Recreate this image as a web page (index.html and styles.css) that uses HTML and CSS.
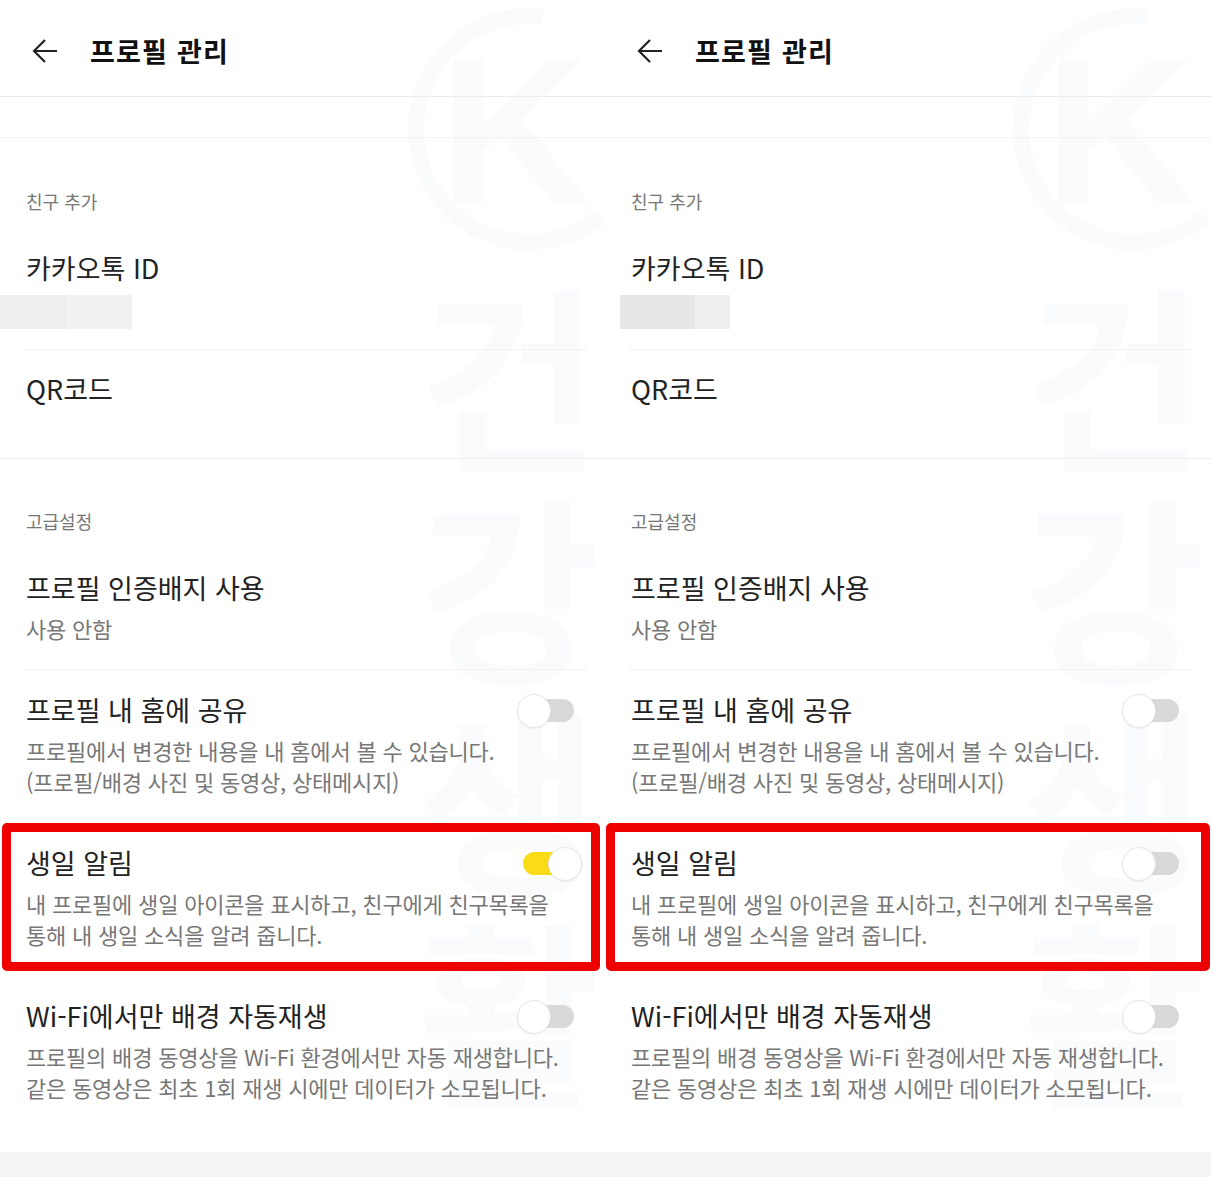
FILE: index.html
```html
<!DOCTYPE html>
<html lang="ko">
<head>
    <meta charset="utf-8">
    <meta name="viewport" content="width=device-width, initial-scale=1.0">
    <title>프로필 관리</title>
    <link rel="stylesheet" href="styles.css">
</head>
<body>
    <div class="screens">
        <!-- before -->
        <section class="panel">
            <div class="watermark" aria-hidden="true">
                <svg class="mark-logo" width="200" height="250" viewBox="0 0 200 250">
                    <path class="mark-ring" d="M140 14 A113 113 0 1 0 197 214"/>
                    <text class="mark-letter" x="36" y="200">K</text>
                </svg>
                <div class="mark-text">
                    <span>건</span>
                    <span>강</span>
                    <span>생</span>
                    <span>활</span>
                </div>
            </div>

            <header class="topbar">
                <svg class="back" width="28" height="26" viewBox="0 0 28 26">
                    <path d="M26 13H3M14 2 3 13l11 11"/>
                </svg>
                <h1>프로필 관리</h1>
            </header>
            <div class="spacer"></div>

            <div class="group group-friend">
                <h2 class="group-title">친구 추가</h2>
                <div class="row row-id">
                    <div class="row-title">카카오톡 ID</div>
                    <div class="redact redact-left"><span></span><span></span></div>
                </div>
                <div class="row row-qr">
                    <div class="row-title">QR코드</div>
                </div>
            </div>

            <div class="group group-advanced">
                <h2 class="group-title">고급설정</h2>
                <div class="row row-line">
                    <div class="row-title">프로필 인증배지 사용</div>
                    <p class="row-desc">사용 안함</p>
                </div>
                <div class="row">
                    <div class="row-head">
                        <div class="row-title">프로필 내 홈에 공유</div>
                        <span class="toggle"></span>
                    </div>
                    <p class="row-desc">프로필에서 변경한 내용을 내 홈에서 볼 수 있습니다.<br>(프로필/배경 사진 및 동영상, 상태메시지)</p>
                </div>
                <div class="row marked">
                    <div class="row-head">
                        <div class="row-title">생일 알림</div>
                        <span class="toggle on"></span>
                    </div>
                    <p class="row-desc">내 프로필에 생일 아이콘을 표시하고, 친구에게 친구목록을<br>통해 내 생일 소식을 알려 줍니다.</p>
                </div>
                <div class="row">
                    <div class="row-head">
                        <div class="row-title">Wi-Fi에서만 배경 자동재생</div>
                        <span class="toggle"></span>
                    </div>
                    <p class="row-desc">프로필의 배경 동영상을 Wi-Fi 환경에서만 자동 재생합니다.<br>같은 동영상은 최초 1회 재생 시에만 데이터가 소모됩니다.</p>
                </div>
            </div>
        </section>

        <!-- after -->
        <section class="panel panel-right">
            <div class="watermark" aria-hidden="true">
                <svg class="mark-logo" width="200" height="250" viewBox="0 0 200 250">
                    <path class="mark-ring" d="M140 14 A113 113 0 1 0 197 214"/>
                    <text class="mark-letter" x="36" y="200">K</text>
                </svg>
                <div class="mark-text">
                    <span>건</span>
                    <span>강</span>
                    <span>생</span>
                    <span>활</span>
                </div>
            </div>

            <header class="topbar">
                <svg class="back" width="28" height="26" viewBox="0 0 28 26">
                    <path d="M26 13H3M14 2 3 13l11 11"/>
                </svg>
                <h1>프로필 관리</h1>
            </header>
            <div class="spacer"></div>

            <div class="group group-friend">
                <h2 class="group-title">친구 추가</h2>
                <div class="row row-id">
                    <div class="row-title">카카오톡 ID</div>
                    <div class="redact redact-right"><span></span><span></span></div>
                </div>
                <div class="row row-qr">
                    <div class="row-title">QR코드</div>
                </div>
            </div>

            <div class="group group-advanced">
                <h2 class="group-title">고급설정</h2>
                <div class="row row-line">
                    <div class="row-title">프로필 인증배지 사용</div>
                    <p class="row-desc">사용 안함</p>
                </div>
                <div class="row">
                    <div class="row-head">
                        <div class="row-title">프로필 내 홈에 공유</div>
                        <span class="toggle"></span>
                    </div>
                    <p class="row-desc">프로필에서 변경한 내용을 내 홈에서 볼 수 있습니다.<br>(프로필/배경 사진 및 동영상, 상태메시지)</p>
                </div>
                <div class="row marked">
                    <div class="row-head">
                        <div class="row-title">생일 알림</div>
                        <span class="toggle"></span>
                    </div>
                    <p class="row-desc">내 프로필에 생일 아이콘을 표시하고, 친구에게 친구목록을<br>통해 내 생일 소식을 알려 줍니다.</p>
                </div>
                <div class="row">
                    <div class="row-head">
                        <div class="row-title">Wi-Fi에서만 배경 자동재생</div>
                        <span class="toggle"></span>
                    </div>
                    <p class="row-desc">프로필의 배경 동영상을 Wi-Fi 환경에서만 자동 재생합니다.<br>같은 동영상은 최초 1회 재생 시에만 데이터가 소모됩니다.</p>
                </div>
            </div>
        </section>
    </div>
    <div class="bottom-band"></div>
</body>
</html>
```
FILE: styles.css
```css
* {
    margin: 0;
    padding: 0;
    box-sizing: border-box;
}

body {
    font-family: "Noto Sans CJK KR", "Noto Sans", sans-serif;
    background: white;
    color: #222;
    overflow: hidden;
}

.screens {
    display: grid;
    grid-template-columns: 605px 606px;
    height: 1152px;
}

.panel {
    position: relative;
    overflow: hidden;
}

.bottom-band {
    height: 25px;
    background: #f5f5f5;
}

/* faint logo behind the content */
.watermark {
    position: absolute;
    top: 0;
    left: 0;
    width: 100%;
    height: 100%;
}

.mark-logo {
    position: absolute;
    top: 3px;
    left: 403px;
}

.mark-ring {
    fill: none;
    stroke: #fafbfc;
    stroke-width: 16;
}

.mark-letter {
    font-family: "Liberation Sans", sans-serif;
    font-size: 210px;
    font-weight: 700;
    fill: #fafbfc;
}

.mark-text {
    position: absolute;
    top: 264px;
    left: 418px;
    display: flex;
    flex-direction: column;
    font-size: 198px;
    font-weight: 700;
    line-height: 212px;
    color: #fafbfc;
}

.topbar {
    position: relative;
    height: 97px;
    display: flex;
    align-items: center;
    padding-left: 31px;
    padding-top: 4px;
    border-bottom: 1px solid #ececec;
}

.back {
    fill: none;
    stroke: #222;
    stroke-width: 2.2;
    margin-top: 2px;
    margin-right: 31px;
}

h1 {
    font-size: 27px;
    font-weight: 700;
    color: #111;
    letter-spacing: 1.2px;
}

.spacer {
    position: relative;
    height: 41px;
    border-bottom: 1px solid #f2f3f4;
}

.group {
    position: relative;
    padding-top: 51px;
}

.group-friend {
    height: 321px;
    border-bottom: 1px solid #ededed;
}

.group-advanced {
    padding-top: 50px;
}

.group-title {
    font-size: 18px;
    font-weight: 400;
    line-height: 24px;
    color: #777;
    padding-left: 26px;
    margin-bottom: 12px;
}

.row {
    position: relative;
    padding: 22px 31px 23px 26px;
}

.panel-right .row {
    padding-right: 32px;
}

.row-id {
    padding-bottom: 21px;
}

.row-id::after,
.row-line::after {
    content: "";
    position: absolute;
    left: 24px;
    right: 18px;
    bottom: 0;
    border-bottom: 1px solid #f3f3f3;
}

.row-line::after {
    bottom: -3px;
}

.row-qr {
    padding-top: 18px;
}

.row-head {
    display: flex;
    justify-content: space-between;
    align-items: center;
}

.row-title {
    font-size: 27px;
    line-height: 41px;
    color: #222;
}

.row-desc {
    margin-top: 5px;
    font-size: 22px;
    line-height: 31px;
    letter-spacing: -0.2px;
    color: #777;
}

.redact {
    display: flex;
    height: 34px;
    margin-top: 7px;
}

.redact-left {
    width: 132px;
    margin-left: -26px;
}

.redact-left span:first-child {
    width: 66px;
    background: #eeeeee;
}

.redact-left span:last-child {
    width: 66px;
    background: #f1f1f1;
}

.redact-right {
    width: 110px;
    margin-left: -11px;
}

.redact-right span:first-child {
    width: 75px;
    background: #e7e7e7;
}

.redact-right span:last-child {
    width: 35px;
    background: #eeeeee;
}

/* red box around the row being explained */
.marked::after {
    content: "";
    position: absolute;
    top: 3px;
    bottom: 2px;
    left: 2px;
    right: 5px;
    border: 9px solid #ee0000;
    border-radius: 5px;
}

.panel-right .marked::after {
    left: 1px;
    right: 1px;
}

.toggle {
    position: relative;
    display: block;
    width: 51px;
    height: 23px;
    margin-top: 2px;
    border-radius: 12px;
    background: #d9d9d9;
}

.toggle::after {
    content: "";
    position: absolute;
    top: -5px;
    left: -6px;
    width: 32px;
    height: 32px;
    border-radius: 50%;
    background: white;
    border: 1px solid #e6e6e6;
    box-shadow: 0 1px 2px rgba(0, 0, 0, 0.06);
}

.toggle.on {
    background: #f9dc17;
}

.toggle.on::after {
    left: 25px;
}
```
